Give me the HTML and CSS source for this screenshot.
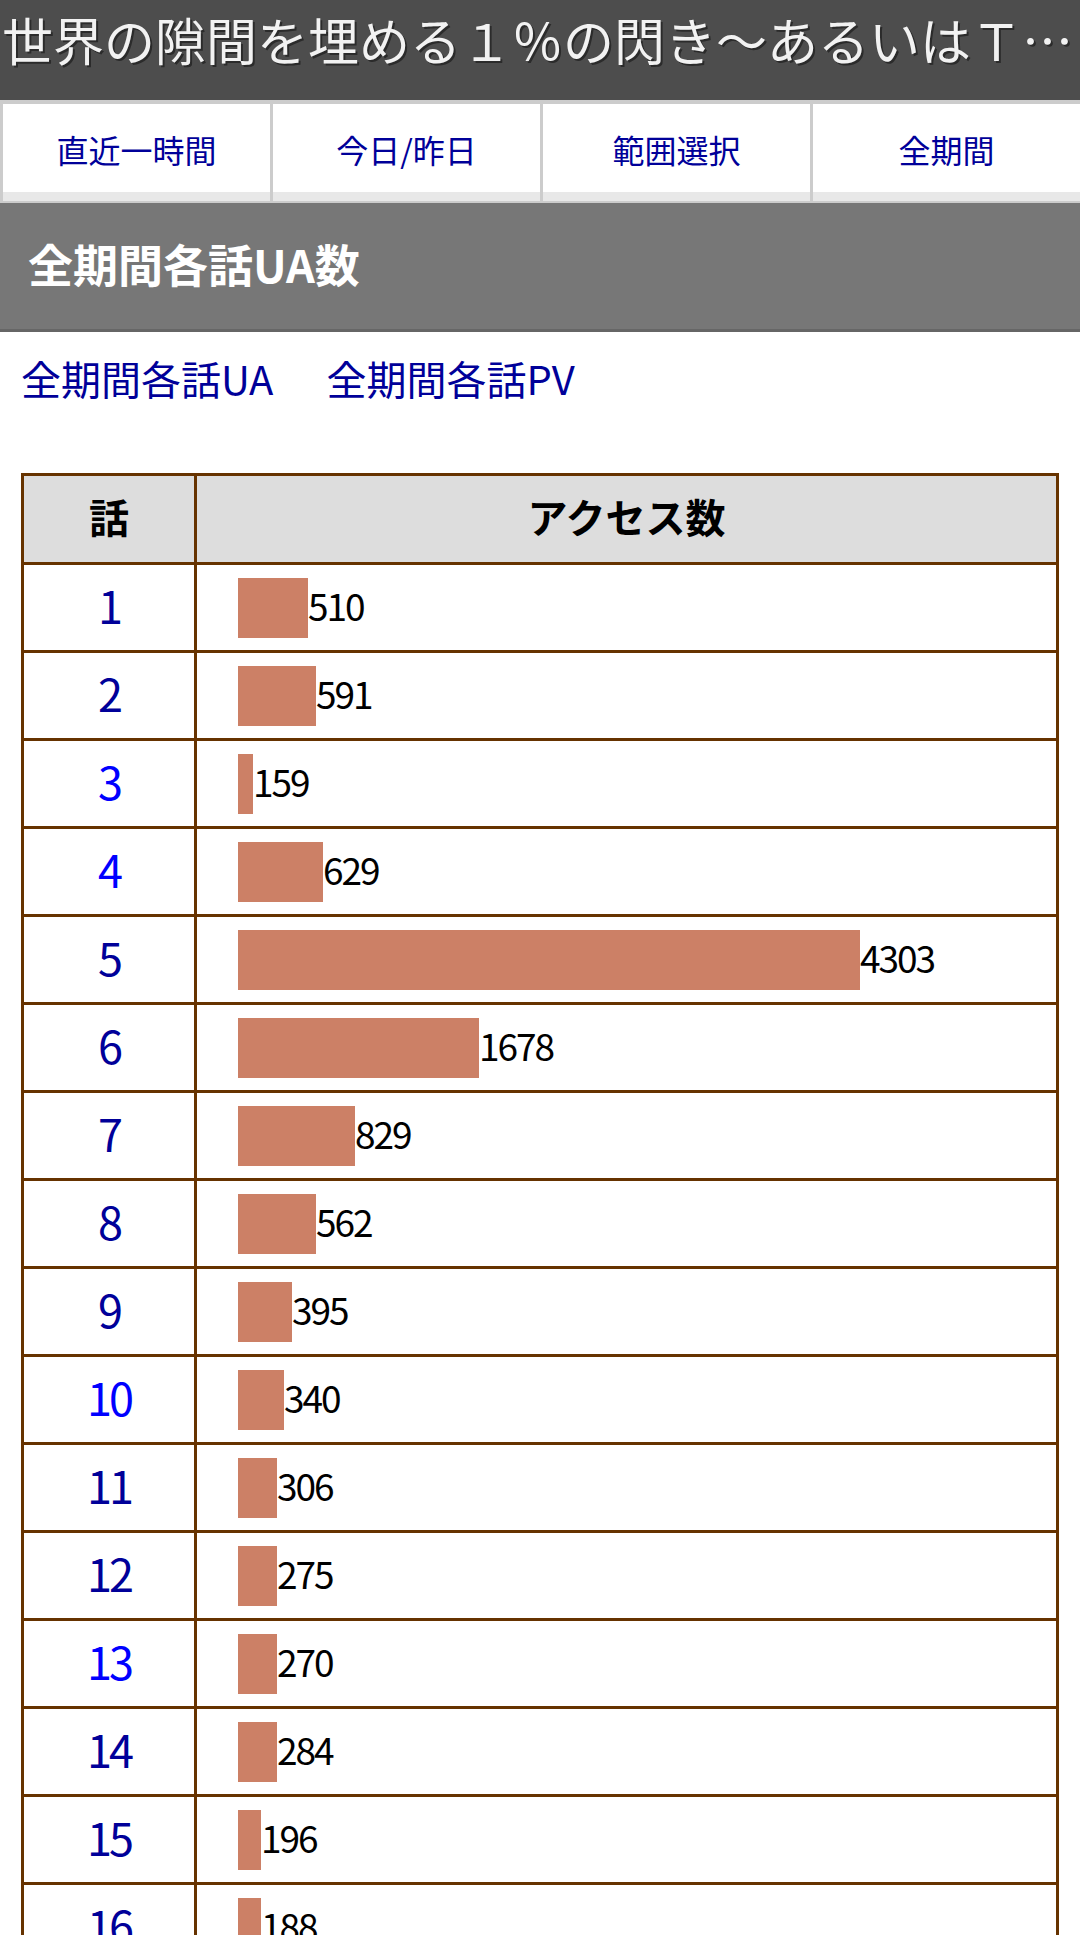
FILE: index.html
```html
<!DOCTYPE html>
<html lang="ja">
<head>
<meta charset="utf-8">
<title>全期間各話UA数</title>
<link rel="stylesheet" href="styles.css">
</head>
<body>
<header class="site-header">
  <h1 class="site-title">世界の隙間を埋める１％の閃き〜あるいはＴ…</h1>
</header>
<nav class="tabs">
  <a class="tab" href="#">直近一時間</a>
  <a class="tab" href="#">今日/昨日</a>
  <a class="tab" href="#">範囲選択</a>
  <a class="tab" href="#">全期間</a>
</nav>
<h2 class="section-title">全期間各話UA数</h2>
<div class="sublinks">
  <a class="sublink" href="#">全期間各話UA</a>
  <a class="sublink" href="#">全期間各話PV</a>
</div>
<table class="access">
  <thead>
    <tr><th class="ep"><div class="cell head">話</div></th><th><div class="cell head">アクセス数</div></th></tr>
  </thead>
  <tbody>
    <tr><td class="ep"><div class="cell num-cell"><a class="epno visited" href="#">1</a></div></td><td><div class="cell bars"><span class="bar" style="width:70px"></span><span class="num">510</span></div></td></tr>
    <tr><td class="ep"><div class="cell num-cell"><a class="epno visited" href="#">2</a></div></td><td><div class="cell bars"><span class="bar" style="width:78px"></span><span class="num">591</span></div></td></tr>
    <tr><td class="ep"><div class="cell num-cell"><a class="epno" href="#">3</a></div></td><td><div class="cell bars"><span class="bar" style="width:15px"></span><span class="num">159</span></div></td></tr>
    <tr><td class="ep"><div class="cell num-cell"><a class="epno" href="#">4</a></div></td><td><div class="cell bars"><span class="bar" style="width:85px"></span><span class="num">629</span></div></td></tr>
    <tr><td class="ep"><div class="cell num-cell"><a class="epno visited" href="#">5</a></div></td><td><div class="cell bars"><span class="bar" style="width:622px"></span><span class="num">4303</span></div></td></tr>
    <tr><td class="ep"><div class="cell num-cell"><a class="epno visited" href="#">6</a></div></td><td><div class="cell bars"><span class="bar" style="width:241px"></span><span class="num">1678</span></div></td></tr>
    <tr><td class="ep"><div class="cell num-cell"><a class="epno visited" href="#">7</a></div></td><td><div class="cell bars"><span class="bar" style="width:117px"></span><span class="num">829</span></div></td></tr>
    <tr><td class="ep"><div class="cell num-cell"><a class="epno visited" href="#">8</a></div></td><td><div class="cell bars"><span class="bar" style="width:78px"></span><span class="num">562</span></div></td></tr>
    <tr><td class="ep"><div class="cell num-cell"><a class="epno visited" href="#">9</a></div></td><td><div class="cell bars"><span class="bar" style="width:54px"></span><span class="num">395</span></div></td></tr>
    <tr><td class="ep"><div class="cell num-cell"><a class="epno" href="#">10</a></div></td><td><div class="cell bars"><span class="bar" style="width:46px"></span><span class="num">340</span></div></td></tr>
    <tr><td class="ep"><div class="cell num-cell"><a class="epno visited" href="#">11</a></div></td><td><div class="cell bars"><span class="bar" style="width:39px"></span><span class="num">306</span></div></td></tr>
    <tr><td class="ep"><div class="cell num-cell"><a class="epno visited" href="#">12</a></div></td><td><div class="cell bars"><span class="bar" style="width:39px"></span><span class="num">275</span></div></td></tr>
    <tr><td class="ep"><div class="cell num-cell"><a class="epno" href="#">13</a></div></td><td><div class="cell bars"><span class="bar" style="width:39px"></span><span class="num">270</span></div></td></tr>
    <tr><td class="ep"><div class="cell num-cell"><a class="epno visited" href="#">14</a></div></td><td><div class="cell bars"><span class="bar" style="width:39px"></span><span class="num">284</span></div></td></tr>
    <tr><td class="ep"><div class="cell num-cell"><a class="epno visited" href="#">15</a></div></td><td><div class="cell bars"><span class="bar" style="width:23px"></span><span class="num">196</span></div></td></tr>
    <tr><td class="ep"><div class="cell num-cell"><a class="epno visited" href="#">16</a></div></td><td><div class="cell bars"><span class="bar" style="width:23px"></span><span class="num">188</span></div></td></tr>
  </tbody>
</table>
</body>
</html>
```
FILE: styles.css
```css
* {
  box-sizing: border-box;
}

body {
  margin: 0;
  background: #ffffff;
  font-family: "Noto Sans CJK JP", "Noto Sans", sans-serif;
}

.site-header {
  height: 100px;
  background: #4d4d4d;
  padding: 9px 0 0 2px;
  overflow: hidden;
}

.site-title {
  margin: 0;
  font-size: 51px;
  font-weight: normal;
  line-height: 61px;
  color: #f2f2f2;
  text-shadow: 2px 2px 0 #2b2b2b;
  white-space: nowrap;
}

.tabs {
  display: grid;
  grid-template-columns: repeat(4, 1fr);
  gap: 3px;
  background: #cccccc;
  padding: 4px 0 2px 3px;
}

.tab {
  height: 97px;
  padding-bottom: 8px;
  display: flex;
  align-items: center;
  justify-content: center;
  background: linear-gradient(#ffffff 0, #ffffff 88px, #e8e8e8 88px);
  font-size: 32px;
  color: #000099;
  text-decoration: none;
}

.section-title {
  margin: 0;
  height: 129px;
  background: #777777;
  border-bottom: 3px solid #666666;
  color: #ffffff;
  font-size: 45px;
  font-weight: bold;
  padding: 0 0 5px 28px;
  display: flex;
  align-items: center;
}

.sublinks {
  display: flex;
  gap: 53px;
  padding: 17px 21px 0;
  margin-bottom: 66px;
  font-size: 40px;
  line-height: 58px;
}

.sublink {
  color: #000099;
  text-decoration: none;
}

.access {
  margin: 0 21px;
  width: 1038px;
  table-layout: fixed;
  border-collapse: separate;
  border-spacing: 0;
  border: 3px solid #663300;
}

.access th,
.access td {
  padding: 0;
  border-right: 3px solid #663300;
  border-bottom: 3px solid #663300;
}

.access th:last-child,
.access td:last-child {
  border-right: none;
}

.access .ep {
  width: 173px;
}

.access th {
  background: #dddddd;
}

.cell {
  height: 85px;
  display: flex;
  align-items: center;
  justify-content: center;
}

.cell.head {
  height: 86px;
  padding-bottom: 6px;
  font-size: 40px;
  font-weight: bold;
  color: #000000;
}

.cell.num-cell {
  padding-bottom: 6px;
}

.epno {
  font-size: 45px;
  letter-spacing: -3px;
  color: #0000ff;
  text-decoration: none;
}

.epno.visited {
  color: #000099;
}

.cell.bars {
  justify-content: flex-start;
  padding-left: 41px;
}

.bar {
  display: block;
  height: 60px;
  background: #cc8066;
}

.num {
  font-size: 37px;
  letter-spacing: -2px;
  line-height: 1;
  padding-bottom: 4px;
  color: #000000;
}
```
